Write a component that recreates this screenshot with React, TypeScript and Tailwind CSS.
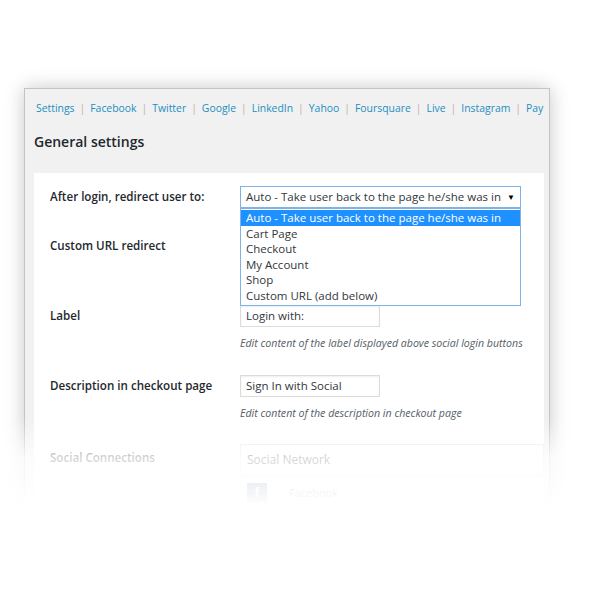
import { Fragment } from "react";

const tabs = [
  "Settings",
  "Facebook",
  "Twitter",
  "Google",
  "LinkedIn",
  "Yahoo",
  "Foursquare",
  "Live",
  "Instagram",
  "PayPal",
];

const redirectOptions = [
  "Auto - Take user back to the page he/she was in",
  "Cart Page",
  "Checkout",
  "My Account",
  "Shop",
  "Custom URL (add below)",
];

const TextInput = ({ value }: { value: string }) => (
  <div className="flex h-[22px] w-[140px] items-center border border-[#dcdcdc] bg-white px-[5px] text-[11.5px] text-[#32373c] shadow-[inset_0_1px_2px_rgba(0,0,0,0.07)]">
    {value}
  </div>
);

const Hint = ({ children }: { children: string }) => (
  <p className="mt-[9px] h-[14px] text-[10.6px] italic leading-[14px] text-[#555d66]">
    {children}
  </p>
);

export default function App() {
  return (
    <div className="relative h-[594px] w-[600px] overflow-hidden bg-white font-['Open_Sans',sans-serif]">
      <div className="ml-[24px] mt-[88px] h-[440px] w-[526px] overflow-hidden border border-[#c4c4c4] bg-[#f1f1f1] pl-[9px] pr-[5px] shadow-[0_0_18px_rgba(0,0,0,0.22)]">
        <nav className="flex h-[38px] items-center overflow-hidden whitespace-nowrap pl-[2px] pt-[1px] text-[10.4px]">
          {tabs.map((tab, i) => (
            <Fragment key={tab}>
              {i > 0 && <span className="mx-[5px] text-[#cfa9a9]">|</span>}
              <span className="text-[#1c8ec0]">{tab}</span>
            </Fragment>
          ))}
        </nav>

        <h2 className="h-[46px] pt-[5px] text-[14px] font-semibold leading-[20px] text-[#23282d]">
          General settings
        </h2>

        <div className="relative h-[400px] bg-white pl-[16px] pt-[13px] text-[11.6px] text-[#23282d]">
          {/* After login */}
          <div className="flex">
            <div className="flex h-[22px] w-[190px] items-center font-semibold">
              After login, redirect user to:
            </div>
            <div className="relative">
              <div className="flex h-[22px] w-[281px] items-center justify-between border border-[#7fb2e5] bg-white pl-[5px] pr-[5px] text-[11.5px] text-[#32373c]">
                <span>{redirectOptions[0]}</span>
                <span className="text-[8px] text-black">▼</span>
              </div>
              <ul className="absolute left-0 top-[22px] z-10 w-[281px] border border-[#7fb2e5] bg-white py-px text-[11.5px] text-[#32373c]">
                {redirectOptions.map((opt, i) => (
                  <li
                    key={opt}
                    className={
                      i === 0
                        ? "h-[15.6px] bg-[#1e90ff] pl-[5px] leading-[15.6px] text-white"
                        : "h-[15.6px] pl-[5px] leading-[15.6px]"
                    }
                  >
                    {opt}
                  </li>
                ))}
              </ul>
            </div>
          </div>

          {/* Custom URL redirect (field hidden under the open dropdown) */}
          <div className="mt-[27px] flex">
            <div className="flex h-[22px] w-[190px] items-center font-semibold">
              Custom URL redirect
            </div>
            <div>
              <div className="h-[22px] w-[281px] border border-[#dcdcdc] bg-white" />
              <div className="mt-[9px] h-[14px]" />
            </div>
          </div>

          {/* Label */}
          <div className="mt-[25px] flex">
            <div className="flex h-[22px] w-[190px] items-center font-semibold">
              Label
            </div>
            <div>
              <TextInput value="Login with:" />
              <Hint>Edit content of the label displayed above social login buttons</Hint>
            </div>
          </div>

          {/* Checkout description */}
          <div className="mt-[25px] flex">
            <div className="flex h-[22px] w-[190px] items-center font-semibold">
              Description in checkout page
            </div>
            <div>
              <TextInput value="Sign In with Social" />
              <Hint>Edit content of the description in checkout page</Hint>
            </div>
          </div>

          {/* Social connections */}
          <div className="mt-[24px] flex">
            <div className="w-[190px] pt-[5px] font-semibold">Social Connections</div>
            <div className="flex-1">
              <div className="flex h-[32px] items-center border border-[#e5e5e5] pl-[6px] text-[12px]">
                Social Network
              </div>
              <div className="flex items-center pt-[7px] pl-[7px]">
                <div className="flex h-[20px] w-[20px] items-center justify-center bg-[#3b5998] text-[12px] font-bold text-white">
                  f
                </div>
                <span className="ml-[22px] text-[11px]">Facebook</span>
              </div>
            </div>
          </div>
        </div>
      </div>

      <div className="absolute left-0 top-[418px] h-[88px] w-full bg-linear-to-b from-white/0 via-white/80 via-45% to-white" />
      <div className="absolute left-0 top-[505px] h-[100px] w-full bg-white" />
    </div>
  );
}
